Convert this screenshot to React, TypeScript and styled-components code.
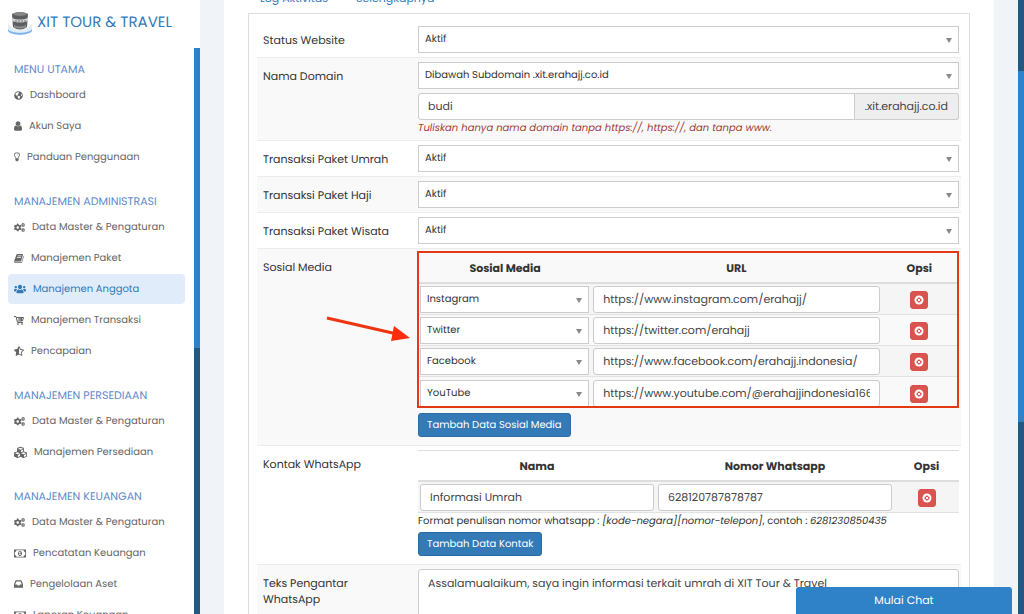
import React from "react";
import styled, { createGlobalStyle, css } from "styled-components";
import { FaCogs, FaCubes, FaGlobeAmericas, FaStarHalfAlt, FaUsers } from "react-icons/fa";

const Global = createGlobalStyle`
  * { box-sizing: border-box; }
  body {
    margin: 0;
    background: #f0f4f8;
    color: #333;
    font-family: Poppins, Inter, "Liberation Sans", sans-serif;
    font-size: 11px;
    line-height: 16px;
    text-rendering: geometricPrecision;
  }
  input, select, textarea, button {
    font-family: inherit;
    margin: 0;
    text-rendering: inherit;
  }
`;

const blue = "#337ab7";
const thumb = "#2f82c8";
const track = "#1f5a85";
const line = "#e2e2e2";

const Page = styled.div`
  display: flex;
  height: 100vh;
  overflow: hidden;
`;

/* ---------- sidebar ---------- */

const Sidebar = styled.aside`
  flex: none;
  width: 200px;
  background: #fff;
  display: flex;
  flex-direction: column;
`;

const Brand = styled.a`
  flex: none;
  height: 48px;
  padding: 0 8px 2px;
  display: flex;
  align-items: center;
  gap: 5px;
  color: ${blue};
  font-size: 15px;
  line-height: 20px;
  white-space: nowrap;
  text-decoration: none;
`;

const SidebarBody = styled.div`
  flex: 1;
  min-height: 0;
  display: flex;
`;

const Menu = styled.nav`
  flex: 1;
  min-width: 0;
  overflow: hidden;
  padding: 9px 8px 0;
`;

const Group = styled.section`
  margin-bottom: 17px;
`;

const GroupTitle = styled.h2`
  margin: 0;
  padding: 1px 6px 0;
  color: #6088cc;
  font-size: 11px;
  font-weight: 400;
  line-height: 22px;
  white-space: nowrap;
`;

const MenuLink = styled.a<{ $active?: boolean }>`
  display: flex;
  align-items: center;
  gap: 7px;
  height: 30px;
  margin-bottom: 1px;
  padding: 0 6px;
  border-radius: 4px;
  color: ${(p) => (p.$active ? blue : "#666")};
  background: ${(p) => (p.$active ? "#e0ecfa" : "transparent")};
  font-size: 10px;
  white-space: nowrap;
  text-decoration: none;
  width: 177px;
  svg { flex: none; }
`;

const Scrollbar = styled.div<{ $before: number; $size: number }>`
  flex: none;
  width: 6px;
  background: ${track};
  padding-top: ${(p) => p.$before}px;
  &::before {
    content: "";
    display: block;
    height: ${(p) => p.$size}px;
    background: ${thumb};
  }
`;

/* ---------- content ---------- */

const Main = styled.main`
  flex: 1;
  min-width: 0;
  padding: 0 24px;
`;

const Card = styled.div`
  background: #fff;
  padding: 0 24px;
  min-height: 100vh;
`;

const Tabs = styled.nav`
  display: flex;
  align-items: flex-end;
  gap: 28px;
  height: 13px;
  padding: 0 12px 7px;
  overflow: hidden;
  a { color: ${blue}; text-decoration: none; }
`;

const Panel = styled.form`
  border: 1px solid #ddd;
  padding: 7px 8px;
`;

const Row = styled.div<{ $shade?: boolean; $first?: boolean }>`
  display: grid;
  grid-template-columns: 155px minmax(0, 1fr);
  column-gap: 0;
  padding: 4px 2px 4px 6px;
  border-top: 1px solid ${(p) => (p.$first ? "transparent" : "#ececec")};
  background: ${(p) => (p.$shade ? "#f9f9f9" : "#fff")};
`;

const labelText = css`
  position: relative;
  padding: 6px 12px 0 0;
  font-size: 11px;
  line-height: 16px;
`;

const Label = styled.label`${labelText}`;
const Caption = styled.div`${labelText}`;

const Stack = styled.div`
  display: flex;
  flex-direction: column;
  align-items: stretch;
`;

const SelectBox = styled.div`
  position: relative;
  &::after {
    content: "";
    position: absolute;
    right: 7px;
    top: 12px;
    border: 3px solid transparent;
    border-top: 5px solid #888;
    border-bottom: 0;
    pointer-events: none;
  }
`;

const SelectField = styled.select`
  display: block;
  width: 100%;
  height: 27px;
  padding: 0 20px 3px 6px;
  appearance: none;
  border: 1px solid #ccc;
  border-radius: 0;
  background: #fff;
  color: #333;
  font-size: 10px;
`;

const TextField = styled.input`
  display: block;
  width: 100%;
  min-width: 0;
  height: 27px;
  padding: 0 9px 1px;
  border: 1px solid #ccc;
  border-radius: 3px;
  background: #fff;
  color: #444;
  font-size: 11px;
`;

const InputGroup = styled.div`
  display: flex;
  margin-top: 4px;
  ${TextField} { border-radius: 3px 0 0 3px; }
`;

const Addon = styled.span`
  flex: none;
  height: 27px;
  padding: 0 10px;
  border: 1px solid #ccc;
  border-left: 0;
  border-radius: 0 3px 3px 0;
  background: #eee;
  color: #444;
  line-height: 25px;
`;

const Hint = styled.em`
  color: #a33a3a;
  font-size: 10px;
  line-height: 16px;
`;

const Note = styled.p`
  margin: 0;
  font-size: 10px;
  line-height: 16px;
`;

const Highlight = styled.div`
  position: relative;
  margin: -2px 0 0 -1px;
  padding: 2px 2px 0;
  &::after {
    content: "";
    position: absolute;
    inset: 0;
    border: 2px solid #e23a17;
    pointer-events: none;
  }
`;

const DataTable = styled.table`
  width: 100%;
  table-layout: fixed;
  border-spacing: 0;
  th {
    height: 31px;
    padding: 1px 0 0;
    border-bottom: 2px solid #ddd;
    font-size: 11px;
    font-weight: 700;
    line-height: 16px;
  }
  td {
    padding: 2px 2px 1px;
    border-bottom: 1px solid ${line};
    text-align: center;
  }
  tbody tr:nth-child(odd) { background: #f5f5f5; }
`;

const SocialTable = styled(DataTable)`
  tbody tr:last-child td { padding-top: 3px; border-bottom: 0; }
  td:first-child { padding-left: 1px; }
`;

const ContactTable = styled(DataTable)`
  border-top: 1px solid #ddd;
`;

const PrimaryButton = styled.button`
  align-self: flex-start;
  height: 24px;
  margin: 5px 0 4px;
  padding: 0 8px;
  border: 1px solid #2e6da4;
  border-radius: 3px;
  background: ${blue};
  color: #fff;
  font-size: 10px;
  line-height: 16px;
`;

const ContactButton = styled(PrimaryButton)`
  margin-top: 3px;
`;

const RemoveButton = styled.button`
  display: flex;
  align-items: center;
  justify-content: center;
  width: 18px;
  height: 18px;
  margin: 0 auto;
  padding: 0;
  border: 1px solid #d9504b;
  border-radius: 3px;
  background: #d9534f;
`;

const Message = styled.textarea`
  display: block;
  width: 100%;
  height: 80px;
  padding: 5px 9px;
  border: 1px solid #ccc;
  border-radius: 3px;
  color: #444;
  font-size: 11px;
  line-height: 16px;
  resize: none;
`;

const Arrow = styled.svg`
  position: absolute;
  left: 62px;
  top: 60px;
  pointer-events: none;
`;

const ChatButton = styled.button`
  position: fixed;
  right: 12px;
  bottom: 0;
  width: 216px;
  height: 27px;
  border: 0;
  border-radius: 3px 3px 0 0;
  background: ${thumb};
  color: #fff;
  font-size: 11px;
`;

/* ---------- icons ---------- */

const Glyph = ({ d, box, w, h = 12 }: { d: string; box: string; w: number; h?: number }) => (
  <svg width={w} height={h} viewBox={box} fill="currentColor" aria-hidden="true">
    <path d={d} />
  </svg>
);

const UserIcon = () => (
  <Glyph w={8} h={10} box="256 96 1280 1600" d="M1536 1399q0 109-62.5 187t-150.5 78h-854q-88 0-150.5-78t-62.5-187q0-85 8.5-160.5t31.5-152 58.5-131 94-89 134.5-34.5q131 128 313 128t313-128q76 0 134.5 34.5t94 89 58.5 131 31.5 152 8.5 160.5zm-256-887q0 159-112.5 271.5t-271.5 112.5-271.5-112.5-112.5-271.5 112.5-271.5 271.5-112.5 271.5 112.5 112.5 271.5z" />
);
const BulbIcon = () => (
  <Glyph w={6} h={10} box="384 96 1024 1632" d="M1120 576q0 13-9.5 22.5t-22.5 9.5-22.5-9.5-9.5-22.5q0-46-54-71t-106-25q-13 0-22.5-9.5t-9.5-22.5 9.5-22.5 22.5-9.5q50 0 99.5 16t87 54 37.5 90zm160 0q0-72-34.5-134t-90-101.5-123-62-136.5-22.5-136.5 22.5-123 62-90 101.5-34.5 134q0 101 68 180 10 11 30.5 33t30.5 33q128 153 141 298h228q13-145 141-298 10-11 30.5-33t30.5-33q68-79 68-180zm128 0q0 155-103 268-45 49-74.5 87t-59.5 95.5-34 107.5q47 28 47 82 0 37-25 64 25 27 25 64 0 52-45 81 13 23 13 47 0 46-31.5 71t-77.5 25q-20 44-60 70t-87 26-87-26-60-70q-46 0-77.5-25t-31.5-71q0-24 13-47-45-29-45-81 0-37 25-64-25-27-25-64 0-54 47-82-4-50-34-107.5t-59.5-95.5-74.5-87q-103-113-103-268 0-99 44.5-184.5t117-142 164-89 186.5-32.5 186.5 32.5 164 89 117 142 44.5 184.5z" />
);
const BookIcon = () => (
  <Glyph w={10} h={9} box="64 128 1664 1540" d="M1703 478q40 57 18 129l-275 906q-19 64-76.5 107.5t-122.5 43.5h-923q-77 0-148.5-53.5t-99.5-131.5q-24-67-2-127 0-4 3-27t4-37q1-8-3-21.5t-3-19.5q2-11 8-21t16.5-23.5 16.5-23.5q23-38 45-91.5t30-91.5q3-10 .5-30t-.5-28q3-11 17-28t17-23q21-36 42-92t25-90q1-9-2.5-32t.5-28q4-13 22-30.5t22-22.5q19-26 42.5-84.5t27.5-96.5q1-8-3-25.5t-2-26.5q2-8 9-18t18-23 17-21q8-12 16.5-30.5t15-35 16-36 19.5-32 26.5-23.5 36-11.5 47.5 5.5l-1 3q38-9 51-9h761q74 0 114 56t18 130l-274 906q-36 119-71.5 153.5t-128.5 34.5h-869q-27 0-38 15-11 16-1 43 24 70 144 70h923q29 0 56-15.5t35-41.5l300-987q7-22 5-57 38 15 59 43zm-1064 2q-4 13 2 22.5t20 9.5h608q13 0 25.5-9.5t16.5-22.5l21-64q4-13-2-22.5t-20-9.5h-608q-13 0-25.5 9.5t-16.5 22.5zm-83 256q-4 13 2 22.5t20 9.5h608q13 0 25.5-9.5t16.5-22.5l21-64q4-13-2-22.5t-20-9.5h-608q-13 0-25.5 9.5t-16.5 22.5z" />
);
const MoneyIcon = () => (
  <Glyph w={12} h={9} box="0 224 1920 1344" d="M768 1152h384v-96h-128v-448h-114l-148 137 77 80q42-37 55-57h2v288h-128v96zm512-256q0 70-21 142t-59.5 134-101.5 101-138 39-138-39-101.5-101-59.5-134-21-142 21-142 59.5-134 101.5-101 138-39 138 39 101.5 101 59.5 134 21 142zm512 256v-512q-106 0-181-75t-75-181h-1152q0 106-75 181t-181 75v512q106 0 181 75t75 181h1152q0-106 75-181t181-75zm128-832v1152q0 26-19 45t-45 19h-1792q-26 0-45-19t-19-45v-1152q0-26 19-45t45-19h1792q26 0 45 19t19 45z" />
);
const InboxIcon = () => (
  <Glyph w={9} h={8} box="128 256 1536 1280" d="M1151 960h316q-1-3-2.5-8t-2.5-8l-212-496h-708l-212 496q-1 2-2.5 8t-2.5 8h316l95 192h320zm513 30v482q0 26-19 45t-45 19h-1408q-26 0-45-19t-19-45v-482q0-62 25-123l238-552q10-25 36.5-42t52.5-17h832q26 0 52.5 17t36.5 42l238 552q25 61 25 123z" />
);
const CartIcon = () => (
  <svg width="10" height="10" viewBox="0 0 20 20" fill="none" stroke="currentColor" strokeWidth="2" aria-hidden="true">
    <path d="M0 3h4l3 12h11M5 5h14l-2 7H7" />
    <path d="M8 8h9M12 5v7M15 5v7" />
    <circle cx="8" cy="18" r="1" />
    <circle cx="16" cy="18" r="1" />
  </svg>
);
const CogsIcon = () => <FaCogs size={11} />;
const RemoveIcon = () => (
  <svg width="10" height="10" viewBox="0 0 20 20" fill="none" aria-hidden="true">
    <circle cx="10" cy="10" r="9" fill="#fff" />
    <circle cx="10" cy="10" r="5" fill="#d9534f" />
    <path d="M7 7l6 6M13 7l-6 6" stroke="#fff" strokeWidth="2" />
  </svg>
);
const Logo = () => (
  <svg width="24" height="24" viewBox="0 0 24 24" aria-hidden="true">
    <path d="M0 14c1 9 23 9 24 0v6c-3 5-21 5-24 0z" fill="#7db4ea" />
    <path d="M0 12c3 9 21 9 24 0v6c-3 5-21 5-24 0z" fill="#e3edf6" />
    <path d="M4 3q8-4 16 0l-1 13q-7 5-14 0z" fill="#5c5d61" />
    <path d="M4 3q8-4 16 0-8 4-16 0z" fill="#85868a" />
    <path d="M4 7q8 3 16 0v3q-8 3-16 0z" fill="#cfcfcf" />
    <path d="M8 9v2M11 9v2M14 9v2M17 9v2" stroke="#77787c" />
    <path d="M6 14q6 3 12 0v2q-6 3-12 0z" fill="#8d8e92" />
  </svg>
);

/* ---------- data ---------- */

type Item = { icon: React.ReactNode; text: string; active?: boolean };

const groups: { title: string; items: Item[] }[] = [
  {
    title: "MENU UTAMA",
    items: [
      { icon: <FaGlobeAmericas size={9} />, text: "Dashboard" },
      { icon: <UserIcon />, text: "Akun Saya" },
      { icon: <BulbIcon />, text: "Panduan Penggunaan" },
    ],
  },
  {
    title: "MANAJEMEN ADMINISTRASI",
    items: [
      { icon: <CogsIcon />, text: "Data Master & Pengaturan" },
      { icon: <BookIcon />, text: "Manajemen Paket" },
      { icon: <FaUsers size={12} />, text: "Manajemen Anggota", active: true },
      { icon: <CartIcon />, text: "Manajemen Transaksi" },
      { icon: <FaStarHalfAlt size={10} />, text: "Pencapaian" },
    ],
  },
  {
    title: "MANAJEMEN PERSEDIAAN",
    items: [
      { icon: <CogsIcon />, text: "Data Master & Pengaturan" },
      { icon: <FaCubes size={13} />, text: "Manajemen Persediaan" },
    ],
  },
  {
    title: "MANAJEMEN KEUANGAN",
    items: [
      { icon: <CogsIcon />, text: "Data Master & Pengaturan" },
      { icon: <MoneyIcon />, text: "Pencatatan Keuangan" },
      { icon: <InboxIcon />, text: "Pengelolaan Aset" },
      { icon: <MoneyIcon />, text: "Laporan Keuangan" },
    ],
  },
];

const socials = [
  ["Instagram", "https://www.instagram.com/erahajj/"],
  ["Twitter", "https://twitter.com/erahajj"],
  ["Facebook", "https://www.facebook.com/erahajj.indonesia/"],
  ["YouTube", "https://www.youtube.com/@erahajjindonesia1660"],
];

const Choice = ({ id, label, value }: { id?: string; label?: string; value: string }) => (
  <SelectBox>
    <SelectField id={id} aria-label={label} defaultValue={value}>
      <option>{value}</option>
    </SelectField>
  </SelectBox>
);

const ChoiceRow = ({ id, label, shade, first }: { id: string; label: string; shade?: boolean; first?: boolean }) => (
  <Row $shade={shade} $first={first}>
    <Label htmlFor={id}>{label}</Label>
    <Choice id={id} value="Aktif" />
  </Row>
);

const Remove = ({ name }: { name: string }) => (
  <RemoveButton type="button" aria-label={`Hapus ${name}`}>
    <RemoveIcon />
  </RemoveButton>
);

export default function App() {
  return (
    <>
      <Global />
      <Page>
        <Sidebar>
          <Brand href="#">
            <Logo />
            XIT TOUR &amp; TRAVEL
          </Brand>
          <SidebarBody>
            <Menu>
              {groups.map((g) => (
                <Group key={g.title}>
                  <GroupTitle>{g.title}</GroupTitle>
                  {g.items.map((it) => (
                    <MenuLink key={it.text} href="#" $active={it.active}>
                      {it.icon}
                      {it.text}
                    </MenuLink>
                  ))}
                </Group>
              ))}
            </Menu>
            <Scrollbar $before={0} $size={300} />
          </SidebarBody>
        </Sidebar>

        <Main>
          <Card>
            <Tabs>
              <a href="#">Log Aktivitas</a>
              <a href="#">Selengkapnya</a>
            </Tabs>
            <Panel>
              <ChoiceRow id="status" label="Status Website" first />
              <Row $shade>
                <Label htmlFor="domain">Nama Domain</Label>
                <Stack>
                  <Choice label="Jenis domain" value="Dibawah Subdomain .xit.erahajj.co.id" />
                  <InputGroup>
                    <TextField id="domain" defaultValue="budi" />
                    <Addon>.xit.erahajj.co.id</Addon>
                  </InputGroup>
                  <Hint>Tuliskan hanya nama domain tanpa https://, https://, dan tanpa www.</Hint>
                </Stack>
              </Row>
              <ChoiceRow id="umrah" label="Transaksi Paket Umrah" />
              <ChoiceRow id="haji" label="Transaksi Paket Haji" shade />
              <ChoiceRow id="wisata" label="Transaksi Paket Wisata" />
              <Row $shade>
                <Caption>
                  Sosial Media
                  <Arrow width="86" height="34" viewBox="0 0 86 34" aria-hidden="true">
                    <path d="M2 5l70 16" stroke="#ee3410" strokeWidth="3" />
                    <path d="M69 13l16 12-19 3z" fill="#ff2d0c" />
                  </Arrow>
                </Caption>
                <Stack>
                  <Highlight>
                    <SocialTable>
                      <colgroup>
                        <col style={{ width: "32%" }} />
                        <col />
                        <col style={{ width: "14%" }} />
                      </colgroup>
                      <thead>
                        <tr>
                          <th>Sosial Media</th>
                          <th>URL</th>
                          <th>Opsi</th>
                        </tr>
                      </thead>
                      <tbody>
                        {socials.map(([name, url]) => (
                          <tr key={name}>
                            <td><Choice label="Sosial media" value={name} /></td>
                            <td><TextField aria-label={`URL ${name}`} defaultValue={url} /></td>
                            <td><Remove name={name} /></td>
                          </tr>
                        ))}
                      </tbody>
                    </SocialTable>
                  </Highlight>
                  <PrimaryButton type="button">Tambah Data Sosial Media</PrimaryButton>
                </Stack>
              </Row>
              <Row>
                <Caption>Kontak WhatsApp</Caption>
                <Stack>
                  <ContactTable>
                    <colgroup>
                      <col style={{ width: "44%" }} />
                      <col style={{ width: "44%" }} />
                      <col />
                    </colgroup>
                    <thead>
                      <tr>
                        <th>Nama</th>
                        <th>Nomor Whatsapp</th>
                        <th>Opsi</th>
                      </tr>
                    </thead>
                    <tbody>
                      <tr>
                        <td><TextField aria-label="Nama" defaultValue="Informasi Umrah" /></td>
                        <td><TextField aria-label="Nomor Whatsapp" defaultValue="628120787878787" /></td>
                        <td><Remove name="kontak" /></td>
                      </tr>
                    </tbody>
                  </ContactTable>
                  <Note>
                    Format penulisan nomor whatsapp : <em>[kode-negara][nomor-telepon]</em>, contoh : <em>6281230850435</em>
                  </Note>
                  <ContactButton type="button">Tambah Data Kontak</ContactButton>
                </Stack>
              </Row>
              <Row $shade>
                <Label htmlFor="intro">Teks Pengantar WhatsApp</Label>
                <Message id="intro" defaultValue="Assalamualaikum, saya ingin informasi terkait umrah di XIT Tour & Travel" />
              </Row>
            </Panel>
          </Card>
        </Main>
        <Scrollbar $before={71} $size={351} />
      </Page>
      <ChatButton type="button">Mulai Chat</ChatButton>
    </>
  );
}
